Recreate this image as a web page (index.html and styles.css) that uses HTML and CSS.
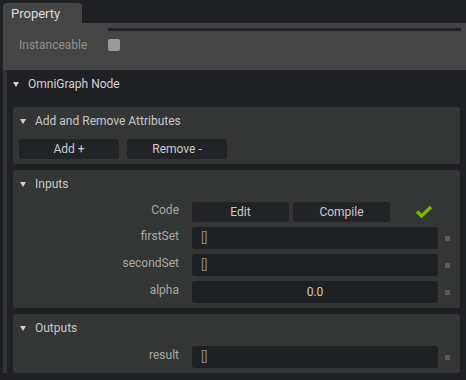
FILE: index.html
```html
<!DOCTYPE html>
<html lang="en">
<head>
    <meta charset="UTF-8">
    <meta name="viewport" content="width=device-width, initial-scale=1.0">
    <title>Property</title>
    <link rel="stylesheet" href="styles.css">
</head>
<body>

    <div class="tabbar">
        <div class="tab">Property</div>
    </div>

    <div class="window">
        <div class="top-panel">
            <div class="top-line"></div>
            <div class="prim-row">
                <span class="prim-label">Instanceable</span>
                <span class="checkbox"></span>
            </div>
        </div>

        <div class="content">
            <div class="node-frame">
                <div class="node-header">
                    <span class="arrow"></span>
                    <span>OmniGraph Node</span>
                </div>

                <div class="node-body">
                    <div class="frame">
                        <div class="frame-header">
                            <span class="arrow"></span>
                            <span>Add and Remove Attributes</span>
                        </div>
                        <div class="frame-body">
                            <div class="button-row">
                                <div class="btn btn-wide">Add +</div>
                                <div class="btn btn-wide">Remove -</div>
                            </div>
                        </div>
                    </div>

                    <div class="frame">
                        <div class="frame-header">
                            <span class="arrow"></span>
                            <span>Inputs</span>
                        </div>
                        <div class="frame-body">
                            <div class="attr-row">
                                <div class="attr-label">Code</div>
                                <div class="btn btn-code">Edit</div>
                                <div class="btn btn-code">Compile</div>
                                <svg class="check" width="18" height="14" viewBox="0 0 18 14">
                                    <polyline points="2,6.5 6.5,11 16,2" fill="none" stroke="#76b900" stroke-width="3.4"/>
                                </svg>
                            </div>
                            <div class="attr-row">
                                <div class="attr-label">firstSet</div>
                                <div class="field">[]</div>
                                <span class="dot"></span>
                            </div>
                            <div class="attr-row">
                                <div class="attr-label">secondSet</div>
                                <div class="field">[]</div>
                                <span class="dot"></span>
                            </div>
                            <div class="attr-row">
                                <div class="attr-label">alpha</div>
                                <div class="field field-number">0.0</div>
                                <span class="dot"></span>
                            </div>
                        </div>
                    </div>

                    <div class="frame">
                        <div class="frame-header">
                            <span class="arrow"></span>
                            <span>Outputs</span>
                        </div>
                        <div class="frame-body">
                            <div class="attr-row">
                                <div class="attr-label">result</div>
                                <div class="field">[]</div>
                                <span class="dot"></span>
                            </div>
                        </div>
                    </div>
                </div>
            </div>
        </div>
    </div>

</body>
</html>
```

FILE: styles.css
```css
body {
    font-family: Roboto, "Liberation Sans", sans-serif;
    font-size: 12px;
    background-color: #1f2023;
    color: #c8c8c8;
    margin: 0;
    width: 466px;
    height: 380px;
    overflow: hidden;
}

.tabbar {
    height: 20px;
    padding: 3px 0 0 3px;
}

.tab {
    width: 71px;
    height: 20px;
    line-height: 21px;
    padding-left: 8px;
    background-color: #454545;
    border-radius: 4px 4px 0 0;
    color: #dcdcdc;
    font-size: 13px;
}

.window {
    margin-left: 3px;
}

.top-panel {
    background-color: #454545;
    height: 47px;
    padding-top: 5px;
    box-sizing: border-box;
}

.top-line {
    height: 3px;
    margin: 0 5px 0 105px;
    background-color: #222326;
}

.prim-row {
    display: flex;
    align-items: center;
    height: 22px;
    margin-top: 3px;
}

.prim-label {
    width: 89px;
    padding-left: 16px;
    padding-bottom: 1px;
    color: #8f8f8f;
    font-size: 12px;
}

.checkbox {
    width: 12px;
    height: 12px;
    border-radius: 2px;
    background-color: #9a9a9a;
}

.content {
    border-left: 4px solid #333436;
}

.node-frame {
    background-color: #1f2023;
}

.node-header {
    display: flex;
    align-items: center;
    height: 28px;
    padding-left: 6px;
    color: #d4d4d4;
    font-size: 12px;
}

.arrow {
    width: 0;
    height: 0;
    border-left: 3px solid transparent;
    border-right: 3px solid transparent;
    border-top: 5px solid #d0d0d0;
    margin-right: 9px;
}

.node-body {
    display: flex;
    flex-direction: column;
    gap: 6px;
    padding: 9px 6px 0 6px;
}

.frame {
    background-color: #343535;
    border-radius: 3px;
}

.frame-header {
    display: flex;
    align-items: center;
    height: 28px;
    padding-left: 7px;
    color: #c8c8c8;
    font-size: 12px;
}

.frame-body {
    display: flex;
    flex-direction: column;
    gap: 5px;
    padding: 4px 0 5px 0;
}

.button-row {
    display: flex;
    gap: 8px;
    padding-left: 6px;
}

.btn {
    height: 20px;
    line-height: 20px;
    text-align: center;
    background-color: #222326;
    border-radius: 3px;
    color: #cccccc;
}

.btn-wide {
    width: 100px;
}

.attr-row {
    display: flex;
    align-items: center;
}

.attr-label {
    width: 166px;
    margin-right: 13px;
    padding-bottom: 4px;
    text-align: right;
    color: #a8a8a8;
}

.btn-code {
    width: 97px;
    margin-right: 4px;
}

.check {
    margin-left: 21px;
}

.field {
    width: 237px;
    height: 22px;
    line-height: 22px;
    padding-left: 9px;
    background-color: #1f2023;
    border-radius: 3px;
    color: #8a8a8a;
}

.field-number {
    width: 246px;
    padding-left: 0;
    text-align: center;
    color: #cccccc;
}

.dot {
    width: 5px;
    height: 5px;
    margin-left: 7px;
    background-color: #5b5b5b;
}
```
